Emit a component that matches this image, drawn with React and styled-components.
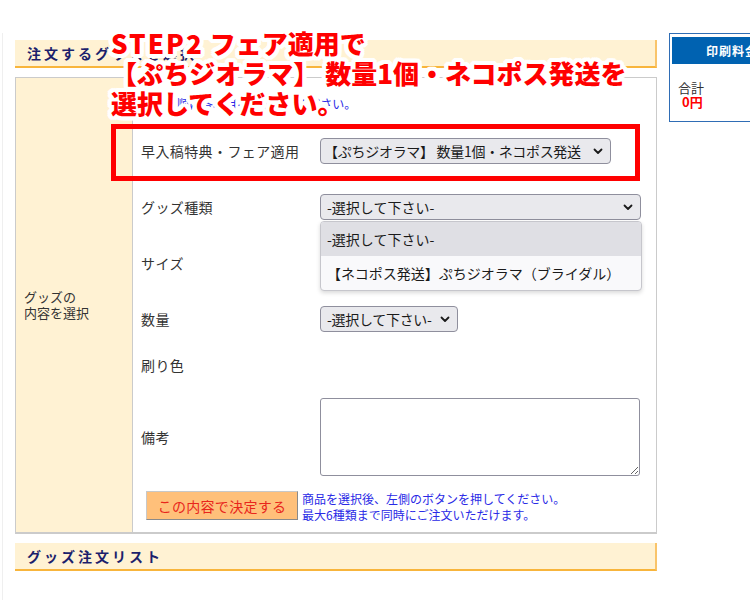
import React from "react";
import styled, { createGlobalStyle } from "styled-components";

const GlobalStyle = createGlobalStyle`
  html, body {
    margin: 0;
    padding: 0;
    background: #fff;
    overflow: hidden;
  }
  body {
    font-family: "Noto Sans CJK JP", "Noto Sans", sans-serif;
    color: #333;
  }
`;

const Page = styled.div`
  position: relative;
  width: 750px;
  height: 600px;
  padding-top: 33px;
  box-sizing: border-box;
`;

const Inner = styled.div`
  display: flex;
  align-items: flex-start;
  gap: 12px;
  margin-left: 2px;
  padding-left: 12px;
  border-left: 1px solid #efefef;
  min-height: 567px;
`;

const MainColumn = styled.div`
  flex: 0 0 642px;
  margin-top: 7px;
`;

const SectionTitle = styled.div`
  height: 26px;
  line-height: 26px;
  padding-left: 12px;
  background: #fff2d3;
  border-bottom: 2px solid #f8b53c;
  border-right: 2px solid #f9c46a;
  color: #1c1f6c;
  font-size: 14px;
  font-weight: 700;
  letter-spacing: 3px;
`;

const OrderTable = styled.div`
  display: grid;
  grid-template-columns: 117px 1fr;
  margin: 9px 0;
  border: 1px solid #cbcbcb;
  border-bottom-width: 2px;
  background: #fff;
`;

const SideLabel = styled.div`
  display: flex;
  align-items: center;
  padding-left: 8px;
  background: #fff2d3;
  border-right: 1px solid #cbcbcb;
  font-size: 13px;
  line-height: 16px;
  color: #333;
`;

const FormCell = styled.div`
  padding-left: 8px;
`;

const Intro = styled.div`
  height: 45px;
  box-sizing: border-box;
  padding-top: 18px;
  font-size: 12px;
  line-height: 16px;
  color: #2a2ae6;
`;

const FieldRow = styled.div`
  display: grid;
  grid-template-columns: 179px 1fr;
  align-items: center;
  height: ${p => p.$h}px;
`;

const FieldLabel = styled.div`
  font-size: 14px;
  letter-spacing: 0.4px;
  color: #333;
`;

const SelectWrap = styled.div`
  position: relative;
  width: ${p => p.$w}px;
`;

const SelectField = styled.div`
  display: flex;
  align-items: center;
  justify-content: space-between;
  height: 26px;
  box-sizing: border-box;
  padding: 0 7px 0 ${p => p.$pad || 6}px;
  background: #e9e9ed;
  border: 1px solid #8f8f9d;
  border-radius: 4px;
  font-size: 14px;
  letter-spacing: ${p => (p.$tight ? "-0.3px" : "0")};
  color: #1a1a1a;
  white-space: nowrap;
`;

const Chevron = () => (
  <svg width="10" height="7" viewBox="0 0 10 7">
    <path d="M1.5 1.5 L5 5 L8.5 1.5" fill="none" stroke="#1a1a1a" strokeWidth="1.8" strokeLinecap="round" strokeLinejoin="round" />
  </svg>
);

const OptionList = styled.div`
  position: absolute;
  top: 27px;
  left: 0;
  right: -1px;
  z-index: 2;
  background: #f9f9fb;
  border: 1px solid #c6c6cc;
  border-radius: 4px;
  box-shadow: 0 2px 4px rgba(0, 0, 0, 0.15);
  overflow: hidden;
`;

const OptionItem = styled.div`
  height: 34px;
  line-height: 34px;
  padding-left: 6px;
  font-size: 14px;
  color: #1a1a1a;
  background: ${p => (p.$active ? "#dfdfe4" : "transparent")};
`;

const NoteArea = styled.textarea`
  display: block;
  width: 320px;
  height: 78px;
  box-sizing: border-box;
  border: 1px solid #8f8f9d;
  border-radius: 3px;
  background: #fff;
  margin: 0;
`;

const ActionRow = styled.div`
  display: flex;
  align-items: flex-start;
  gap: 4px;
  padding: 0 0 9px 5px;
`;

const SubmitButton = styled.button`
  width: 152px;
  height: 29px;
  margin: 0;
  padding: 0;
  background: #ffc07a;
  border: 1px solid;
  border-color: #c8c8c8 #8a8a8a #8a8a8a #c8c8c8;
  color: #e8261c;
  font-family: inherit;
  font-size: 14px;
  letter-spacing: 0.3px;
`;

const ActionNote = styled.div`
  font-size: 12px;
  line-height: 16px;
  color: #2a2ae6;
`;

const Sidebar = styled.div`
  flex: 0 0 124px;
  border: 1px solid #2f6db5;
  padding: 3px 0 0 2px;
  height: 89px;
  box-sizing: border-box;
`;

const SidebarHead = styled.div`
  height: 27px;
  line-height: 27px;
  background: #0062b1;
  color: #fff;
  font-size: 12px;
  font-weight: 700;
  text-align: center;
  letter-spacing: 1px;
`;

const SidebarBody = styled.div`
  padding: 17px 0 0 6px;
  font-size: 13px;
  line-height: 14px;
  color: #333;
`;

const Price = styled.div`
  padding-left: 4px;
  color: #ff0000;
  font-weight: 700;
`;

const Callout = styled.div`
  position: absolute;
  left: 111px;
  top: 28px;
  z-index: 5;
  font-size: 26px;
  line-height: 30px;
  font-weight: 900;
  color: #ff0000;
  white-space: nowrap;
  text-shadow:
    4px 0 0 #fff, -4px 0 0 #fff, 0 4px 0 #fff, 0 -4px 0 #fff,
    3px 3px 0 #fff, -3px 3px 0 #fff, 3px -3px 0 #fff, -3px -3px 0 #fff,
    4px 2px 0 #fff, -4px 2px 0 #fff, 4px -2px 0 #fff, -4px -2px 0 #fff,
    2px 4px 0 #fff, -2px 4px 0 #fff, 2px -4px 0 #fff, -2px -4px 0 #fff;
`;

const Latin = styled.span`
  letter-spacing: 2px;
`;

const Highlight = styled.div`
  position: absolute;
  left: 111px;
  top: 124px;
  width: 529px;
  height: 57px;
  box-sizing: border-box;
  border: 5px solid #ff0000;
  z-index: 4;
  pointer-events: none;
`;

export default function App() {
  return (
    <>
      <GlobalStyle />
      <Page>
        <Inner>
          <MainColumn>
            <SectionTitle>注文するグッズを選択</SectionTitle>
            <OrderTable>
              <SideLabel>
                グッズの
                <br />
                内容を選択
              </SideLabel>
              <FormCell>
                <Intro>上から順に各項目を選択してください。</Intro>
                <FieldRow $h={56}>
                  <FieldLabel>早入稿特典・フェア適用</FieldLabel>
                  <SelectWrap $w={291}>
                    <SelectField $pad={3} $tight>
                      <span>【ぷちジオラマ】 数量1個・ネコポス発送</span>
                      <Chevron />
                    </SelectField>
                  </SelectWrap>
                </FieldRow>
                <FieldRow $h={56}>
                  <FieldLabel>グッズ種類</FieldLabel>
                  <SelectWrap $w={321}>
                    <SelectField>
                      <span>-選択して下さい-</span>
                      <Chevron />
                    </SelectField>
                    <OptionList>
                      <OptionItem $active>-選択して下さい-</OptionItem>
                      <OptionItem>【ネコポス発送】ぷちジオラマ（ブライダル）</OptionItem>
                    </OptionList>
                  </SelectWrap>
                </FieldRow>
                <FieldRow $h={56}>
                  <FieldLabel>サイズ</FieldLabel>
                </FieldRow>
                <FieldRow $h={56}>
                  <FieldLabel>数量</FieldLabel>
                  <SelectWrap $w={138}>
                    <SelectField $tight>
                      <span>-選択して下さい-</span>
                      <Chevron />
                    </SelectField>
                  </SelectWrap>
                </FieldRow>
                <FieldRow $h={36}>
                  <FieldLabel>刷り色</FieldLabel>
                </FieldRow>
                <FieldRow $h={108}>
                  <FieldLabel>備考</FieldLabel>
                  <NoteArea />
                </FieldRow>
                <ActionRow>
                  <SubmitButton type="button">この内容で決定する</SubmitButton>
                  <ActionNote>
                    商品を選択後、左側のボタンを押してください。
                    <br />
                    最大6種類まで同時にご注文いただけます。
                  </ActionNote>
                </ActionRow>
              </FormCell>
            </OrderTable>
            <SectionTitle>グッズ注文リスト</SectionTitle>
          </MainColumn>
          <Sidebar>
            <SidebarHead>印刷料金</SidebarHead>
            <SidebarBody>
              合計
              <Price>0円</Price>
            </SidebarBody>
          </Sidebar>
        </Inner>
        <Callout>
          <Latin>STEP2</Latin> フェア適用で
          <br />
          【ぷちジオラマ】 数量1個・ネコポス発送を
          <br />
          選択してください。
        </Callout>
        <Highlight />
      </Page>
    </>
  );
}
